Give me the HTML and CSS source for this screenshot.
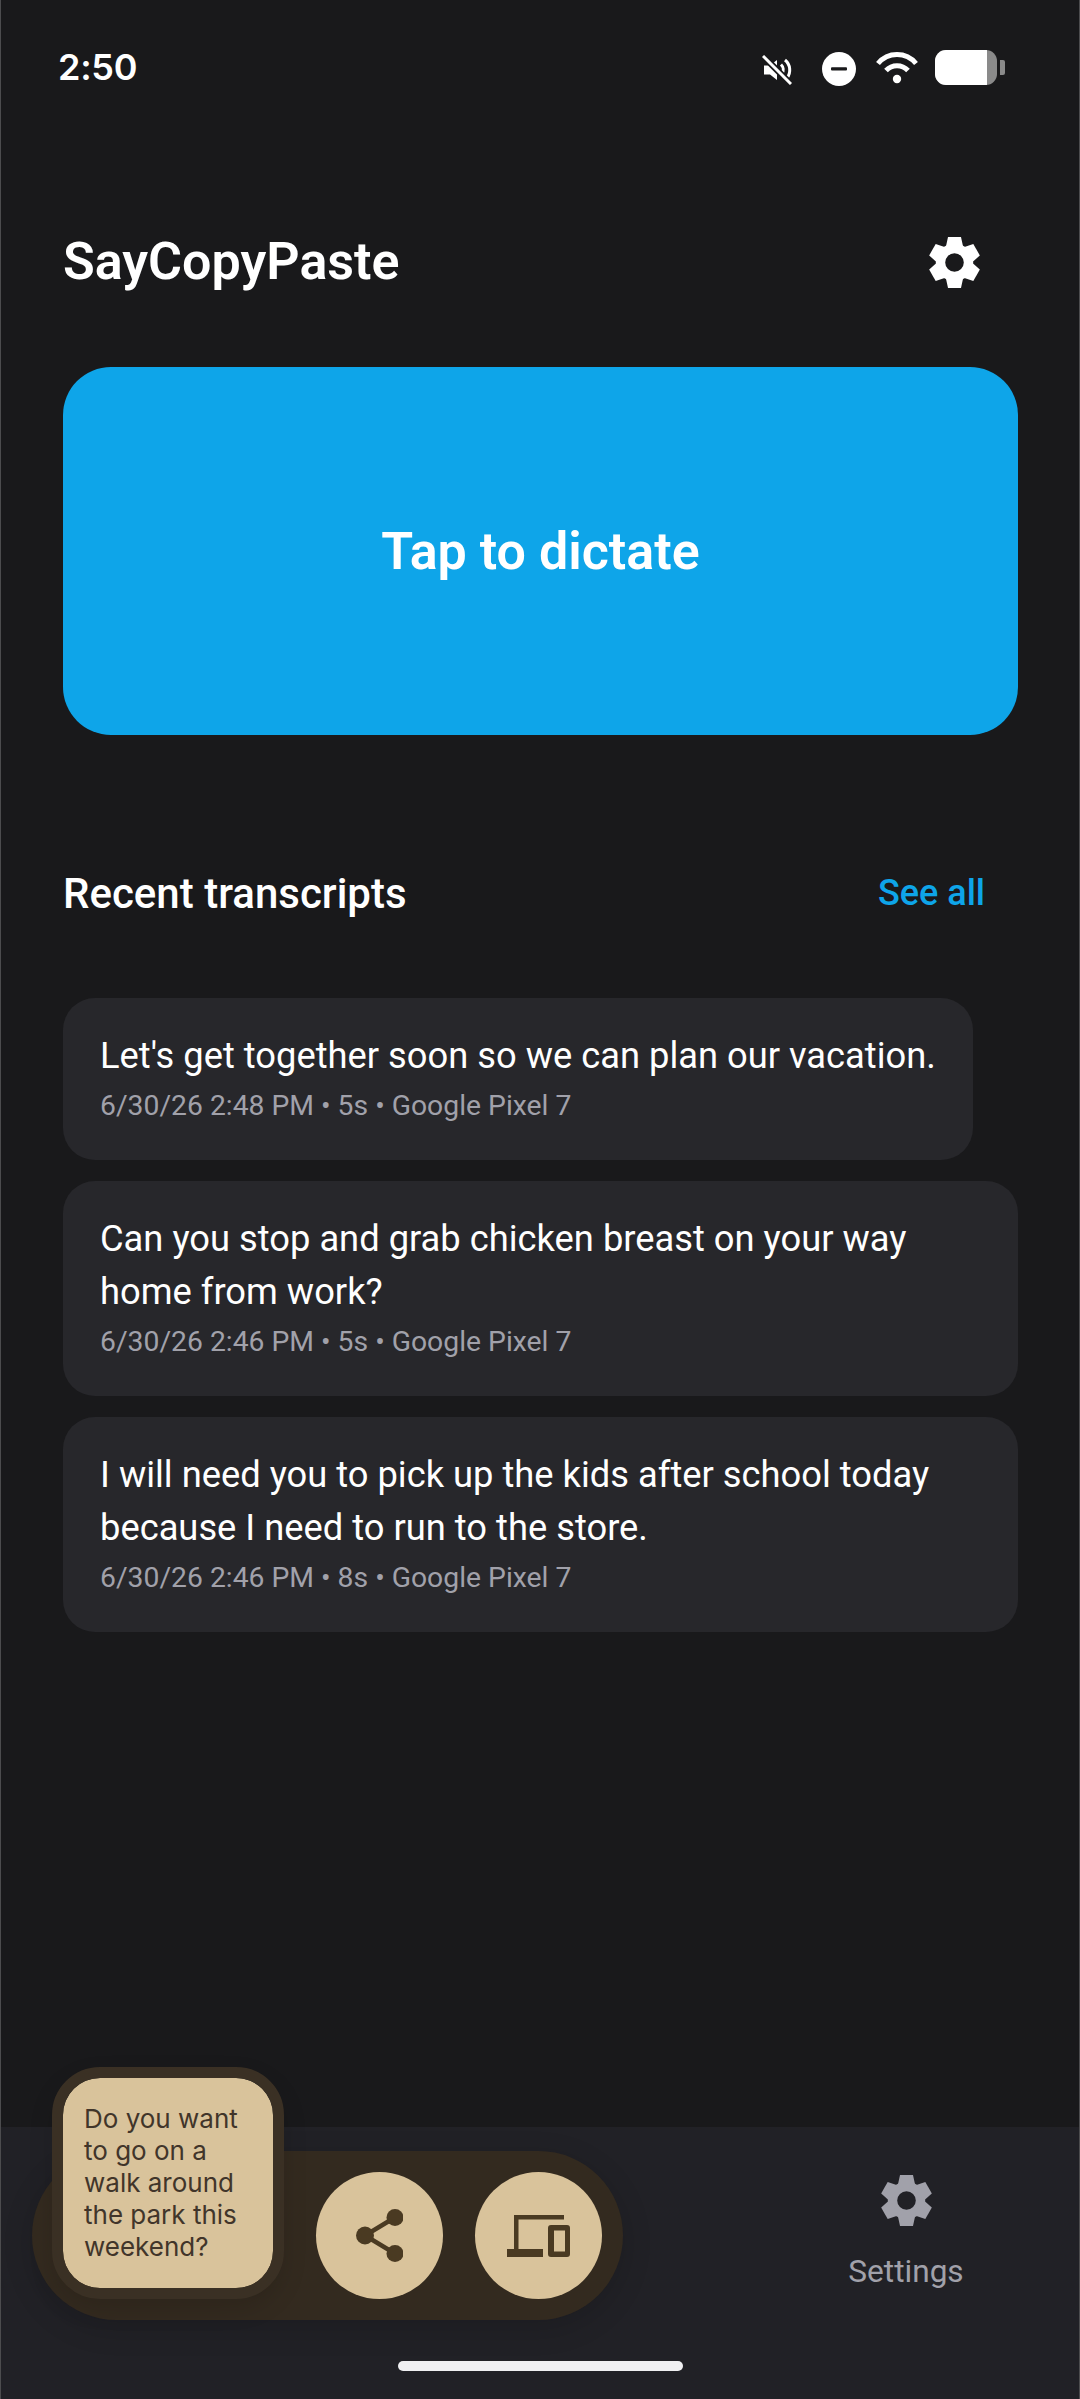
FILE: index.html
```html
<!DOCTYPE html>
<html lang="en">
<head>
<meta charset="utf-8">
<title>SayCopyPaste</title>
<link rel="stylesheet" href="styles.css">
</head>
<body>
<svg class="defs" width="0" height="0" aria-hidden="true">
  <symbol id="gear" viewBox="-25.5 -25.5 51 51">
    <circle r="14" fill="none" stroke="currentColor" stroke-width="9.4"/>
    <g fill="currentColor">
      <path id="tooth" d="M-6.5-25.5H6.5L9-14H-9Z"/>
      <path d="M-6.5-25.5H6.5L9-14H-9Z" transform="rotate(60)"/>
      <path d="M-6.5-25.5H6.5L9-14H-9Z" transform="rotate(120)"/>
      <path d="M-6.5-25.5H6.5L9-14H-9Z" transform="rotate(180)"/>
      <path d="M-6.5-25.5H6.5L9-14H-9Z" transform="rotate(240)"/>
      <path d="M-6.5-25.5H6.5L9-14H-9Z" transform="rotate(300)"/>
    </g>
  </symbol>
</svg>
<div class="app">
  <header class="status">
    <span class="clock">2:50</span>
    <div class="status-icons">
      <svg class="ic-mute" viewBox="0 0 30 30">
        <path d="M2 10.5H8L15 5V25L8 19.5H2Z" fill="#fff"/>
        <path d="M19 9.5a7 7 0 0 1 1 9M23 5a13 13 0 0 1 2 18" fill="none" stroke="#fff" stroke-width="3"/>
        <path d="M1 1L29 29" stroke="#19191b" stroke-width="6.5"/>
        <path d="M1 1L29 29" stroke="#fff" stroke-width="3"/>
      </svg>
      <svg class="ic-dnd" viewBox="0 0 34 34">
        <circle cx="17" cy="17" r="17" fill="#fff"/>
        <rect x="9" y="15.2" width="16" height="3.4" rx="1" fill="#19191b"/>
      </svg>
      <svg class="ic-wifi" viewBox="0 0 42 32">
        <path d="M2 11.5C12-.5 30-.5 40 11.5" fill="none" stroke="#fff" stroke-width="5"/>
        <path d="M10 18.5C16 12 26 12 32 18.5" fill="none" stroke="#fff" stroke-width="5"/>
        <circle cx="21" cy="27" r="4.2" fill="#fff"/>
      </svg>
      <div class="battery">
        <div class="battery-body"><div class="battery-level"></div></div>
        <div class="battery-nub"></div>
      </div>
    </div>
  </header>

  <main class="content">
    <div class="title-row">
      <h1 class="title">SayCopyPaste</h1>
      <svg class="gear gear-top"><use href="#gear"/></svg>
    </div>
    <button class="dictate">Tap to dictate</button>
    <div class="section-row">
      <h2 class="section-title">Recent transcripts</h2>
      <span class="see-all">See all</span>
    </div>
    <div class="cards">
      <article class="card card-fit">
        <p class="card-text">Let's get together soon so we can plan our vacation.</p>
        <p class="card-meta">6/30/26 2:48 PM • 5s • Google Pixel 7</p>
      </article>
      <article class="card">
        <p class="card-text">Can you stop and grab chicken breast on your way home from work?</p>
        <p class="card-meta">6/30/26 2:46 PM • 5s • Google Pixel 7</p>
      </article>
      <article class="card">
        <p class="card-text">I will need you to pick up the kids after school today because I need to run to the store.</p>
        <p class="card-meta">6/30/26 2:46 PM • 8s • Google Pixel 7</p>
      </article>
    </div>
  </main>

  <nav class="nav">
    <div class="nav-item">
      <svg class="gear"><use href="#gear"/></svg>
      <span class="nav-label">Settings</span>
    </div>
    <div class="home-bar"></div>
  </nav>

  <aside class="overlay">
    <div class="pill">
      <button class="round">
        <svg class="ic-share" viewBox="0 0 47 53">
          <path d="M38 9L9 26.5L38 44" fill="none" stroke="#4a3a22" stroke-width="4.5"/>
          <circle cx="39" cy="8.500" r="8.500" fill="#4a3a22"/>
          <circle cx="9" cy="26.500" r="9" fill="#4a3a22"/>
          <circle cx="39" cy="44.500" r="8.500" fill="#4a3a22"/>
        </svg>
      </button>
      <button class="round">
        <svg class="ic-devices" viewBox="0 0 63 42">
          <path fill="#4a3a22" d="M7 0H57V4.500H11.500V34H36V42H0V34H7Z"/>
          <path fill="#4a3a22" fill-rule="evenodd" d="M44 10H60A3 3 0 0 1 63 13V39A3 3 0 0 1 60 42H44A3 3 0 0 1 41 39V13A3 3 0 0 1 44 10ZM47 15.500V36.500H58V15.500Z"/>
        </svg>
      </button>
    </div>
    <div class="bubble">Do you want to go on a walk around the park this weekend?</div>
  </aside>
</div>
</body>
</html>
```
FILE: styles.css
```css
* { box-sizing: border-box; }
html, body { margin: 0; padding: 0; background: #19191b; }
.defs { position: absolute; }
.app {
  position: relative;
  width: 1080px;
  height: 2399px;
  overflow: hidden;
  display: flex;
  flex-direction: column;
  background: #19191b;
  color: #fff;
  font-family: Roboto, "Noto Sans", sans-serif;
}
.app::after {
  content: "";
  position: absolute;
  top: 0; bottom: 0; left: 0; right: 0;
  border-left: 1px solid #4c4c4e;
  border-right: 1px solid #4c4c4e;
  pointer-events: none;
}
.status {
  height: 134px;
  padding: 44px 75px 0 58px;
  display: flex;
  justify-content: space-between;
  align-items: flex-start;
}
.clock { font-size: 36px; line-height: 46px; font-weight: 600; font-family: Inter, Roboto, sans-serif; letter-spacing: -0.3px; }
.status-icons { display: flex; align-items: flex-start; padding-top: 6px; }
.ic-mute { width: 30px; height: 30px; margin-top: 5px; }
.ic-dnd { width: 34px; height: 34px; margin: 2px 0 0 30px; }
.ic-wifi { width: 42px; height: 32px; margin: 2px 0 0 20px; }
.battery { display: flex; align-items: center; margin-left: 17px; }
.battery-body {
  width: 62px; height: 35px;
  border-radius: 11px;
  background: #8a8a8a;
  overflow: hidden;
}
.battery-level { width: 52px; height: 100%; background: #fff; }
.battery-nub { width: 5px; height: 15px; margin-left: 3px; background: #8a8a8a; border-radius: 0 2px 2px 0; }

.content { flex: 1; padding: 0 62px 0 63px; display: flex; flex-direction: column; }
.title-row { height: 76px; margin-top: 90px; padding-right: 38px; display: flex; justify-content: space-between; align-items: center; }
.title { margin: 0; font-size: 52px; line-height: 76px; font-weight: 600; }
.gear { width: 51px; height: 51px; display: block; }
.gear-top { color: #fff; }
.dictate {
  margin-top: 67px;
  height: 368px;
  border: 0;
  border-radius: 48px;
  background: #0ea5e9;
  color: #fff;
  font: 600 52px Roboto, sans-serif;
}
.section-row { height: 50px; margin-top: 133px; padding-right: 33px; display: flex; justify-content: space-between; align-items: center; }
.section-title { margin: 0; font-size: 42px; font-weight: 500; }
.see-all { font-size: 36px; font-weight: 500; color: #0ea5e9; }
.cards { margin-top: 80px; display: flex; flex-direction: column; gap: 21px; align-items: flex-start; }
.card {
  width: 100%;
  padding: 31px 37px 36px;
  background: #27272b;
  border-radius: 32px;
}
.card-fit { width: auto; }
.card-text { margin: 0; font-size: 36.3px; line-height: 53px; }
.card-meta { margin: 6px 0 0; font-size: 28.3px; line-height: 36px; color: #a1a1aa; }

.nav {
  position: relative;
  height: 272px;
  background: #212126;
  display: flex;
  justify-content: flex-end;
}
.nav-item { width: 348px; padding-top: 48px; display: flex; flex-direction: column; align-items: center; color: #a1a1aa; }
.nav-label { margin-top: 26px; font-size: 31.6px; line-height: 40px; }
.home-bar { position: absolute; left: 398px; top: 234px; width: 285px; height: 10px; border-radius: 5px; background: #f0f0f2; }

.overlay { position: absolute; left: 32px; top: 2067px; width: 591px; height: 253px; }
.pill {
  position: absolute;
  left: 0; right: 0; top: 84px; bottom: 0;
  border-radius: 85px;
  background: #332a1f;
  box-shadow: 0 8px 30px rgba(0,0,0,.15);
  display: flex;
  justify-content: flex-end;
  align-items: center;
  gap: 32px;
  padding: 0 21px 0 0;
}
.round {
  width: 127px; height: 127px;
  padding: 0;
  border: 0;
  border-radius: 50%;
  background: #d9c39b;
  display: flex;
  align-items: center;
  justify-content: center;
}
.ic-share { width: 47px; height: 53px; }
.ic-devices { width: 63px; height: 42px; }
.bubble {
  position: absolute;
  left: 20px; top: 0;
  width: 232px; height: 232px;
  padding: 25px 24px 0 21px;
  border: 11px solid #3a3024;
  border-radius: 48px;
  background: #d9c39b padding-box;
  color: #41352a;
  font: 400 26px/32px Inter, sans-serif;
  box-shadow: 0 10px 24px rgba(0,0,0,.12);
}
```
